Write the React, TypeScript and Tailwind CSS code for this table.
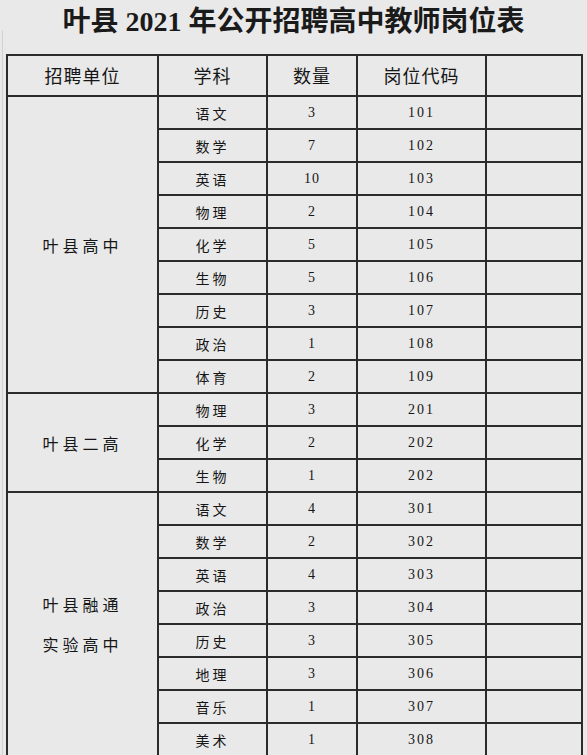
const groups = [
  {
    unit: ["叶县高中"],
    rows: [
      ["语文", "3", "101"],
      ["数学", "7", "102"],
      ["英语", "10", "103"],
      ["物理", "2", "104"],
      ["化学", "5", "105"],
      ["生物", "5", "106"],
      ["历史", "3", "107"],
      ["政治", "1", "108"],
      ["体育", "2", "109"],
    ],
  },
  {
    unit: ["叶县二高"],
    rows: [
      ["物理", "3", "201"],
      ["化学", "2", "202"],
      ["生物", "1", "202"],
    ],
  },
  {
    unit: ["叶县融通", "实验高中"],
    rows: [
      ["语文", "4", "301"],
      ["数学", "2", "302"],
      ["英语", "4", "303"],
      ["政治", "3", "304"],
      ["历史", "3", "305"],
      ["地理", "3", "306"],
      ["音乐", "1", "307"],
      ["美术", "1", "308"],
    ],
  },
];

const cell = "border-2 border-[#2b2b2b] text-center align-middle p-0";
const cjk = "font-['Noto_Sans_CJK_SC',sans-serif]";
const num = "font-['Liberation_Serif','Noto_Sans_CJK_SC',serif]";

export default function App() {
  return (
    <div className="w-[587px] h-[755px] overflow-hidden bg-[#e9e9e9] text-[#161616] relative">
      {/* faint page edge */}
      <div className="absolute left-[2px] top-[30px] bottom-0 w-px bg-[#d2d2d2]" />

      <h1 className="h-[54px] pt-[2px] text-center text-[28px] leading-[40px] font-bold font-['Liberation_Serif','Noto_Sans_CJK_SC',serif] text-[#1a1a1a]">
        叶县 2021 年公开招聘高中教师岗位表
      </h1>

      <div className="pl-[6px]">
        <table className="border-collapse table-fixed w-[575px]">
          <colgroup>
            <col className="w-[151px]" />
            <col className="w-[109px]" />
            <col className="w-[90px]" />
            <col className="w-[129px]" />
            <col className="w-[96px]" />
          </colgroup>
          <thead>
            <tr className="h-[41px]">
              {["招聘单位", "学科", "数量", "岗位代码", ""].map((h, i) => (
                <th
                  key={i}
                  className={`${cell} ${cjk} font-normal text-[18px] tracking-[1px]`}
                >
                  {h}
                </th>
              ))}
            </tr>
          </thead>
          <tbody>
            {groups.map((g) =>
              g.rows.map((r, i) => (
                <tr key={g.unit[0] + i} className="h-[33px]">
                  {i === 0 && (
                    <td
                      rowSpan={g.rows.length}
                      className={`${cell} ${cjk} text-[16px] tracking-[4px] leading-[40px]`}
                    >
                      {g.unit.map((u) => (
                        <div key={u}>{u}</div>
                      ))}
                    </td>
                  )}
                  <td className={`${cell} ${cjk} text-[14px] leading-[20px] tracking-[3px]`}>
                    {r[0]}
                  </td>
                  <td className={`${cell} ${num} text-[14px] tracking-[1px]`}>
                    {r[1]}
                  </td>
                  <td className={`${cell} ${num} text-[14px] tracking-[2px]`}>
                    {r[2]}
                  </td>
                  <td className={cell}></td>
                </tr>
              ))
            )}
          </tbody>
        </table>
      </div>
    </div>
  );
}
